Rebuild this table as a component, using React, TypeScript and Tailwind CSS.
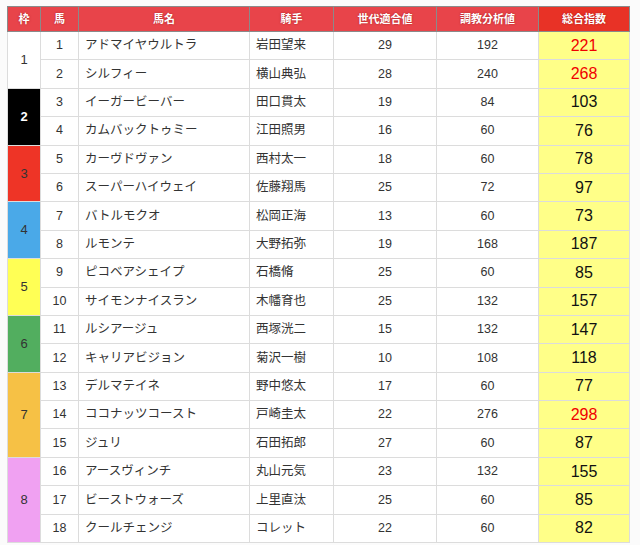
const rows: [number, string, string, number, number, number][] = [
  [1, "アドマイヤウルトラ", "岩田望来", 29, 192, 221],
  [2, "シルフィー", "横山典弘", 28, 240, 268],
  [3, "イーガービーバー", "田口貫太", 19, 84, 103],
  [4, "カムバックトゥミー", "江田照男", 16, 60, 76],
  [5, "カーヴドヴァン", "西村太一", 18, 60, 78],
  [6, "スーパーハイウェイ", "佐藤翔馬", 25, 72, 97],
  [7, "バトルモクオ", "松岡正海", 13, 60, 73],
  [8, "ルモンテ", "大野拓弥", 19, 168, 187],
  [9, "ピコベアシェイプ", "石橋脩", 25, 60, 85],
  [10, "サイモンナイスラン", "木幡育也", 25, 132, 157],
  [11, "ルシアージュ", "西塚洸二", 15, 132, 147],
  [12, "キャリアビジョン", "菊沢一樹", 10, 108, 118],
  [13, "デルマテイネ", "野中悠太", 17, 60, 77],
  [14, "ココナッツコースト", "戸崎圭太", 22, 276, 298],
  [15, "ジュリ", "石田拓郎", 27, 60, 87],
  [16, "アースヴィンチ", "丸山元気", 23, 132, 155],
  [17, "ビーストウォーズ", "上里直汰", 25, 60, 85],
  [18, "クールチェンジ", "コレット", 22, 60, 82],
];

// 枠: [first horse, span, bg class, text class]
const frames: Record<number, [number, number, string, string]> = {
  1: [1, 2, "bg-white", "text-[#333]"],
  3: [2, 2, "bg-black", "text-white font-bold"],
  5: [3, 2, "bg-[#ee3426]", "text-[#333]"],
  7: [4, 2, "bg-[#4aa9e8]", "text-[#333]"],
  9: [5, 2, "bg-[#ffff55]", "text-[#333]"],
  11: [6, 2, "bg-[#52ae5f]", "text-[#333]"],
  13: [7, 3, "bg-[#f6c145]", "text-[#333]"],
  16: [8, 3, "bg-[#f0a1f2]", "text-[#333]"],
};

const highlight = new Set([221, 268, 298]);

const th = "border border-[#8a8a8a] bg-[#e8444a] text-white text-[11px] font-bold text-center h-[25px] [text-shadow:0_0_2px_rgba(120,0,0,0.6)]";
const td = "border border-[#dcdcdc] h-[28.4px] text-[12.5px] text-[#333]";

export default function App() {
  return (
    <div className="w-[640px] h-[545px] bg-[#fbfbfb] pt-[6px] pl-[7px] overflow-hidden font-['Liberation_Sans','Noto_Sans_CJK_JP',sans-serif]">
      <table className="border-collapse table-fixed w-[622px] bg-white">
        <colgroup>
          <col className="w-[33px]" />
          <col className="w-[38px]" />
          <col className="w-[171px]" />
          <col className="w-[84px]" />
          <col className="w-[103px]" />
          <col className="w-[102px]" />
          <col className="w-[91px]" />
        </colgroup>
        <thead>
          <tr>
            <th className={th}>枠</th>
            <th className={th}>馬</th>
            <th className={th}>馬名</th>
            <th className={th}>騎手</th>
            <th className={th}>世代適合値</th>
            <th className={th}>調教分析値</th>
            <th className={`${th} !bg-[#e83226]`}>総合指数</th>
          </tr>
        </thead>
        <tbody>
          {rows.map(([no, name, jockey, a, b, total]) => {
            const f = frames[no];
            return (
              <tr key={no}>
                {f && (
                  <td rowSpan={f[1]} className={`${td} ${f[2]} text-center !text-[13px] ${f[3]}`}>
                    {f[0]}
                  </td>
                )}
                <td className={`${td} text-center`}>{no}</td>
                <td className={`${td} pl-[6px]`}>{name}</td>
                <td className={`${td} pl-[6px]`}>{jockey}</td>
                <td className={`${td} text-center`}>{a}</td>
                <td className={`${td} text-center`}>{b}</td>
                <td
                  className={`${td} bg-[#ffff88] text-center !text-[16px] ${
                    highlight.has(total) ? "!text-[#f00000]" : "!text-[#111]"
                  }`}
                >
                  {total}
                </td>
              </tr>
            );
          })}
        </tbody>
      </table>
    </div>
  );
}
